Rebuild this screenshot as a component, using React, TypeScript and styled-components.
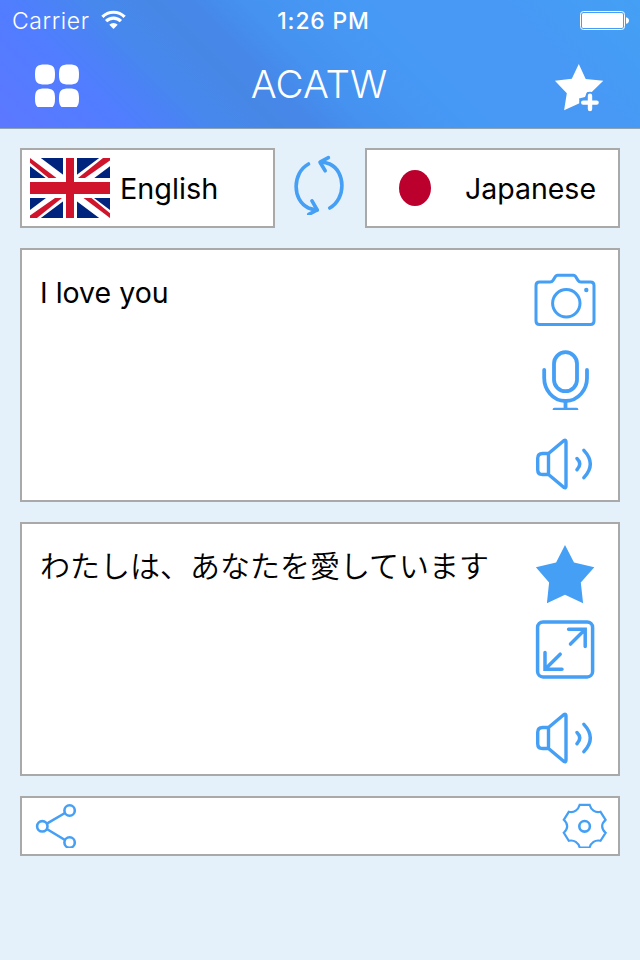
import React from 'react';
import styled, { createGlobalStyle } from 'styled-components';

const BLUE = '#459ff5';

const Global = createGlobalStyle`
  * { box-sizing: border-box; }
  html, body { margin: 0; padding: 0; background: #e4f1fb; }
  svg { display: block; flex: none; }
`;

const Screen = styled.div`
  width: 640px;
  height: 960px;
  background: #e4f1fb;
  color: #000;
  font-family: Inter, 'Noto Sans CJK JP', sans-serif;
`;

const Header = styled.header`
  height: 129px;
  color: #fff;
  border-bottom: 1px solid #8fa3b5;
  background: linear-gradient(
    45deg,
    #5c78ff 0%,
    #517dff 17%,
    #4a83f5 24%,
    #4788ee 28%,
    #4687e6 36%,
    #4687e8 41%,
    #4592f0 48%,
    #4799f6 62%,
    #4799f5 82%,
    #44a0f4 100%
  );
`;

const StatusBar = styled.div`
  height: 42px;
  display: grid;
  grid-template-columns: 1fr auto 1fr;
  align-items: center;
  padding: 0 11px 0 12px;
  line-height: 42px;
`;

const Carrier = styled.div`
  display: flex;
  align-items: center;
  gap: 11px;
  font-size: 23px;
  letter-spacing: 0.6px;
  font-weight: 300;

  svg { margin-top: -2px; }
`;

const Clock = styled.div`
  font-size: 22.8px;
  font-weight: 500;
  letter-spacing: 0.9px;
  padding-left: 6px;
`;

const BatterySlot = styled.div`
  justify-self: end;
`;

const NavBar = styled.div`
  height: 86px;
  display: grid;
  grid-template-columns: 60px 1fr 60px;
  align-items: center;
  padding: 0 30px 0 28px;
`;

const Title = styled.h1`
  margin: 0;
  text-align: center;
  font-size: 38.5px;
  font-weight: 300;
  line-height: 82px;
  padding-bottom: 2px;
`;

const Content = styled.main`
  display: flex;
  flex-direction: column;
  gap: 20px;
  padding: 19px 20px 0;
`;

const Languages = styled.div`
  display: grid;
  grid-template-columns: 255px 1fr 255px;
  height: 80px;
`;

const Card = styled.div`
  background: #fff;
  border: 2px solid #a9a9a9;
`;

const LanguageCard = styled(Card)`
  display: flex;
  align-items: center;
  padding: 0 8px;
`;

const LanguageName = styled.span<{ $alignEnd?: boolean }>`
  font-size: ${(p) => (p.$alignEnd ? '28.5px' : '28.8px')};
  line-height: 40px;
  flex: 1;
  padding: ${(p) => (p.$alignEnd ? '2px 14px 0 0' : '2px 0 0 10px')};
  text-align: ${(p) => (p.$alignEnd ? 'right' : 'left')};
  white-space: nowrap;
`;

const SwapButton = styled.div`
  display: flex;
  justify-content: center;
  padding-top: 5px;
`;

const TextCard = styled(Card)`
  display: flex;
  justify-content: space-between;
  height: 254px;
  padding: 20px 23px 0 18px;
`;

const Phrase = styled.p<{ $japanese?: boolean }>`
  margin: 0;
  font-family: ${(p) => (p.$japanese ? "'Noto Sans CJK JP', sans-serif" : "Inter, sans-serif")};
  font-size: ${(p) => (p.$japanese ? '30px' : '28.5px')};
  font-weight: ${(p) => (p.$japanese ? 350 : 400)};
  line-height: ${(p) => (p.$japanese ? '41px' : '46px')};
  white-space: nowrap;
`;

const Actions = styled.div<{ $gaps: [number, number] }>`
  display: flex;
  flex-direction: column;
  svg:nth-child(2) { margin-top: ${(p) => p.$gaps[0]}px; }
  svg:nth-child(3) { margin-top: ${(p) => p.$gaps[1]}px; }
`;

const Toolbar = styled(Card)`
  display: flex;
  justify-content: space-between;
  height: 60px;
  padding: 5px 11px 0 13px;
`;

const Wifi = () => (
  <svg width="25" height="20" viewBox="0 0 25 20">
    <g fill="none" stroke="#fff" strokeWidth="3.2">
      <path d="M1.4 6.9a15.6 15.6 0 0 1 22.2 0" />
      <path d="M5.1 11.2a10.4 10.4 0 0 1 14.8 0" />
    </g>
    <path fill="#fff" d="M8.3 14.8a6 6 0 0 1 8.4 0l-4.2 4.3z" />
  </svg>
);

const Battery = () => (
  <svg width="49" height="20" viewBox="0 0 49 20">
    <rect x=".5" y=".5" width="44" height="18" rx="3" fill="none" stroke="#fff" />
    <rect x="2" y="2" width="41" height="15" rx="1.5" fill="#fff" />
    <path fill="#fff" d="M46 6.2c4 .5 4 6.1 0 6.6z" />
  </svg>
);

const squircle = 'M10 0C18 0 20 2 20 10S18 20 10 20 0 18 0 10 2 0 10 0Z';

const GridIcon = () => (
  <svg width="60" height="44" viewBox="28 63 60 44" fill="#fff">
    {[[35, 64], [59, 64], [35, 88], [59, 88]].map(([x, y]) => (
      <path key={`${x}-${y}`} d={squircle} transform={`translate(${x} ${y + 0.6})`} />
    ))}
  </svg>
);

const StarAdd = () => (
  <svg width="60" height="60" viewBox="550 55 60 60">
    <path fill="#fff" d="M578.8 64l6.9 15 17.6 1.8-11.8 11.4h-4.500l-2 4.800-6 1.500 1 4.600-15.900 7.100 2.700-16.900-11.900-12.500 16.900-2.100z" />
    <path d="M590 95.800v13.200M583.200 102.600h13.400" stroke="#4799f5" strokeWidth="8" strokeLinecap="round" />
    <path d="M590 95.800v13.200M583.200 102.600h13.400" stroke="#fff" strokeWidth="4.400" strokeLinecap="round" />
  </svg>
);

const UnionJack = () => (
  <svg width="80" height="60" viewBox="0 0 80 60">
    <path fill="#00247d" d="M0 0h80v60H0z" />
    <path d="M0 0l80 60M80 0L0 60" stroke="#fff" strokeWidth="13" />
    <path
      fill="#cf142b"
      d="M0 0v4.800L18.500 20H26.500zM80 0h-7L48 20h7L80 2.500zM80 60v-4.800L61.500 40H53.500zM0 60h7L32 40h-7L0 57.500z"
    />
    <path d="M0 30h80" stroke="#fff" strokeWidth="20" />
    <path d="M40 0v60" stroke="#fff" strokeWidth="14" />
    <path d="M40 0v60" stroke="#cf142b" strokeWidth="8" />
    <path d="M0 30h80" stroke="#cf142b" strokeWidth="12" />
  </svg>
);

const JapanFlag = () => (
  <svg width="80" height="60" viewBox="0 0 80 60">
    <ellipse cx="40" cy="30" rx="16" ry="18" fill="#bc002d" />
  </svg>
);

const Swap = () => (
  <svg width="60" height="62" viewBox="290 153 60 62" fill="none" stroke={BLUE} strokeWidth="3.600" strokeLinecap="round">
    <path d="M308.500 164c-16.500 9-16.500 36.500 0 44 2.500 1 5 1.500 8.500 2" />
    <path d="M312 200.800l5.200 9.200-8.400 4.300" strokeLinejoin="round" />
    <path d="M329.700 208c16.300-9 16.300-36.500 0-44-2.500-1-5-1.600-8.500-1.800" />
    <path d="M325.200 170.800l-5.200-8.600 8.400-4.600" strokeLinejoin="round" />
  </svg>
);

const Camera = () => (
  <svg width="60" height="60" viewBox="535 270 60 60" fill="none" stroke={BLUE} strokeWidth="3" overflow="visible">
    <path d="M539.500 282h10.500q2 0 3-1.600l2.500-4q.8-1.100 2-1.100h16q1.200 0 2 1.100l2.500 4q1 1.600 3 1.600h9.500q3.500 0 3.500 3.500v35.500q0 3.500-3.500 3.500h-51q-3.500 0-3.500-3.500v-35.500q0-3.500 3.500-3.500z" />
    <circle cx="566.300" cy="303.300" r="13.700" />
    <circle cx="586.300" cy="290" r="2.200" fill={BLUE} stroke="none" />
  </svg>
);

const Mic = () => (
  <svg width="60" height="60" viewBox="535 350 60 60" fill="none" stroke={BLUE} strokeWidth="3.800" strokeLinecap="round">
    <rect x="554" y="352.200" width="23" height="39" rx="11.500" />
    <path d="M544.200 370v8c0 11 8 23 21.300 23s21.500-12 21.500-23v-8M565.500 401v8M554.500 409.700h22" />
  </svg>
);

const Speaker = () => (
  <svg width="60" height="60" viewBox="535 434 60 60" fill="none" stroke={BLUE} strokeWidth="3.400" strokeLinecap="round" strokeLinejoin="round">
    <path d="M548.500 453.500h-6q-4.800 0-4.800 4.800v11.400q0 4.800 4.800 4.800h6zM548.500 453.500l15.500-13q2-1 2 1.500v44q0 2.500-2 1.500l-15.500-13" />
    <path d="M577 458.500q5.500 5.500 0 11.200M583.900 450.300q12.800 13.700 0 27.400" />
  </svg>
);

const Star = () => (
  <svg width="60" height="60" viewBox="535 544 60 60" fill={BLUE}>
    <path d="M565 545l9 17.600 20.300 4.600-13.500 15.300 2.300 20.800-18.100-8.500-18.100 8.500 2.200-20.800-13.200-15.300 20.200-4.600z" />
  </svg>
);

const Expand = () => (
  <svg width="60" height="60" viewBox="535 619 60 60" fill="none" stroke={BLUE} strokeWidth="3.500">
    <rect x="537.600" y="621.900" width="55" height="55" rx="5.500" />
    <path strokeLinecap="round" d="M568.600 629.300h16.600v17.200M585 629.500l-14.500 14.600M545 652.500v16.800h17M545.300 669l14.900-14.800" />
  </svg>
);

const Share = () => (
  <svg width="44" height="45" viewBox="35 803 44 45" fill="none" stroke={BLUE} strokeWidth="2.600">
    <circle cx="42.300" cy="826.300" r="5.200" />
    <circle cx="69.600" cy="810.500" r="5.200" />
    <circle cx="69.600" cy="842.500" r="5.200" />
    <path d="M46.800 823.600L65 813M46.800 829L65 840" />
  </svg>
);

const Gear = () => (
  <svg width="45" height="45" viewBox="562 803 45 45" fill="none" stroke={BLUE} strokeWidth="2.200">
    <circle cx="584.600" cy="826.300" r="5.300" strokeWidth="2.600" />
    <path d="M579.700 804.800h9.900c1.300 5 5.500 8.300 10.900 7l5.100 8c-4.600 4-4.600 9 0 13l-5.100 8c-5.400-1.300-9.600 2-10.900 6.700h-9.900c-1.300-4.700-5.500-8-10.900-6.700l-5-8c4.500-4 4.500-9 0-13l5-8c5.400 1.300 9.600-2 10.900-7z" />
  </svg>
);

export default function App() {
  return (
    <>
      <Global />
      <Screen>
        <Header>
          <StatusBar>
            <Carrier>Carrier <Wifi /></Carrier>
            <Clock>1:26 PM</Clock>
            <BatterySlot><Battery /></BatterySlot>
          </StatusBar>
          <NavBar>
            <GridIcon />
            <Title>ACATW</Title>
            <StarAdd />
          </NavBar>
        </Header>
        <Content>
          <Languages>
            <LanguageCard>
              <UnionJack />
              <LanguageName>English</LanguageName>
            </LanguageCard>
            <SwapButton><Swap /></SwapButton>
            <LanguageCard>
              <JapanFlag />
              <LanguageName $alignEnd>Japanese</LanguageName>
            </LanguageCard>
          </Languages>
          <TextCard>
            <Phrase>I love you</Phrase>
            <Actions $gaps={[20, 24]}><Camera /><Mic /><Speaker /></Actions>
          </TextCard>
          <TextCard>
            <Phrase $japanese>わたしは、あなたを愛しています</Phrase>
            <Actions $gaps={[15, 29]}><Star /><Expand /><Speaker /></Actions>
          </TextCard>
          <Toolbar><Share /><Gear /></Toolbar>
        </Content>
      </Screen>
    </>
  );
}
